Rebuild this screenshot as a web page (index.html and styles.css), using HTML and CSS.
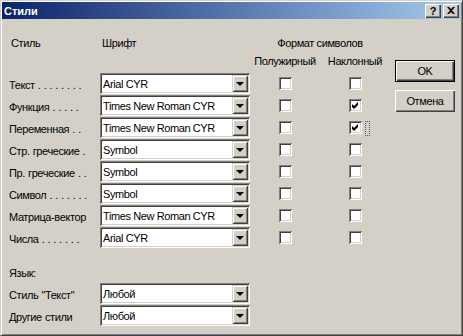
FILE: index.html
```
<!DOCTYPE html>
<html lang="ru">
<head>
  <meta charset="UTF-8">
  <title>Стили</title>
  <link rel="stylesheet" href="styles.css">
</head>
<body>
  <div class="window">
    <div class="titlebar">
      <span class="title">Стили</span>
      <div class="caption-buttons">
        <span class="cap-btn help">?</span>
        <span class="cap-btn close">
          <svg width="8" height="7" viewBox="0 0 8 7"><path d="M0 0h2l2 2 2-2h2L5 3.5 8 7H6L4 5 2 7H0l3-3.5z" fill="#000"/></svg>
        </span>
      </div>
    </div>
    <div class="client">
      <div class="styles">
        <div class="row head">
          <span class="hdr">Стиль</span>
          <span class="hdr">Шрифт</span>
          <span class="hdr fmt">Формат символов</span>
        </div>
        <div class="row sub">
          <span></span><span></span>
          <span class="sub-hdr">Полужирный</span>
          <span class="sub-hdr">Наклонный</span>
        </div>

        <div class="rows">
          <div class="row item">
            <span class="label">Текст . . . . . . . .</span>
            <div class="combo"><span class="value">Arial CYR</span><span class="drop"><i></i></span></div>
            <span class="cell"><span class="check"></span></span>
            <span class="cell"><span class="check"></span></span>
          </div>
          <div class="row item">
            <span class="label">Функция . . . . .</span>
            <div class="combo"><span class="value">Times New Roman CYR</span><span class="drop"><i></i></span></div>
            <span class="cell"><span class="check"></span></span>
            <span class="cell"><span class="check on"><svg width="7" height="7" viewBox="0 0 7 7"><path d="M0 2l2 2 4-4v3L2 7 0 5z" fill="#000"/></svg></span></span>
          </div>
          <div class="row item">
            <span class="label">Переменная . .</span>
            <div class="combo"><span class="value">Times New Roman CYR</span><span class="drop"><i></i></span></div>
            <span class="cell"><span class="check"></span></span>
            <span class="cell"><span class="check on"><svg width="7" height="7" viewBox="0 0 7 7"><path d="M0 2l2 2 4-4v3L2 7 0 5z" fill="#000"/></svg><span class="focus"></span></span></span>
          </div>
          <div class="row item">
            <span class="label">Стр. греческие .</span>
            <div class="combo"><span class="value">Symbol</span><span class="drop"><i></i></span></div>
            <span class="cell"><span class="check"></span></span>
            <span class="cell"><span class="check"></span></span>
          </div>
          <div class="row item">
            <span class="label">Пр. греческие . .</span>
            <div class="combo"><span class="value">Symbol</span><span class="drop"><i></i></span></div>
            <span class="cell"><span class="check"></span></span>
            <span class="cell"><span class="check"></span></span>
          </div>
          <div class="row item">
            <span class="label">Символ . . . . . . .</span>
            <div class="combo"><span class="value">Symbol</span><span class="drop"><i></i></span></div>
            <span class="cell"><span class="check"></span></span>
            <span class="cell"><span class="check"></span></span>
          </div>
          <div class="row item">
            <span class="label">Матрица-вектор</span>
            <div class="combo"><span class="value">Times New Roman CYR</span><span class="drop"><i></i></span></div>
            <span class="cell"><span class="check"></span></span>
            <span class="cell"><span class="check"></span></span>
          </div>
          <div class="row item">
            <span class="label">Числа . . . . . . .</span>
            <div class="combo"><span class="value">Arial CYR</span><span class="drop"><i></i></span></div>
            <span class="cell"><span class="check"></span></span>
            <span class="cell"><span class="check"></span></span>
          </div>
        </div>

        <div class="lang-title">Язык:</div>
        <div class="rows">
          <div class="row item">
            <span class="label">Стиль "Текст"</span>
            <div class="combo"><span class="value">Любой</span><span class="drop"><i></i></span></div>
          </div>
          <div class="row item">
            <span class="label">Другие стили</span>
            <div class="combo"><span class="value">Любой</span><span class="drop"><i></i></span></div>
          </div>
        </div>
      </div>

      <div class="side">
        <span class="btn default">OK</span>
        <span class="btn">Отмена</span>
      </div>
    </div>
  </div>
</body>
</html>
```
FILE: styles.css
```
html,
body {
  margin: 0;
  background-color: #d4d0c8;
  font-family: "Liberation Sans", Arial, sans-serif;
  font-size: 11px;
  letter-spacing: -0.4px;
  color: #000;
}
.window {
  width: 463px;
  height: 336px;
  box-sizing: border-box;
  background: #d4d0c8;
  border: 1px solid;
  border-color: #d4d0c8 #404040 #404040 #d4d0c8;
  box-shadow: inset 1px 1px #fff, inset -1px -1px #808080;
  padding: 1px;
}
.titlebar {
  height: 17px;
  display: flex;
  align-items: center;
  justify-content: space-between;
  padding: 0 2px 0 2px;
  background: linear-gradient(to right, #0a246a, #a6caf0);
}
.title {
  color: #fff;
  font-weight: bold;
  font-size: 11px;
  letter-spacing: 0;
}
.caption-buttons {
  display: flex;
  gap: 2px;
}
.cap-btn {
  width: 16px;
  height: 14px;
  box-sizing: border-box;
  display: flex;
  align-items: center;
  justify-content: center;
  background: #d4d0c8;
  box-shadow: inset 1px 1px #fff, inset -1px -1px #404040, inset -2px -2px #808080;
  font-weight: bold;
  font-size: 11px;
  line-height: 14px;
}
.client {
  display: flex;
  padding: 17px 0 0 7px;
}
.styles {
  width: 381px;
}
.row {
  display: grid;
  grid-template-columns: 91px 150px 70px 70px;
  align-items: center;
}
.head {
  height: 14px;
}
.hdr {
  padding-left: 2px;
}
.hdr.fmt {
  grid-column: 3 / span 2;
  text-align: center;
  padding-left: 0;
}
.sub {
  height: 14px;
  margin-top: 4px;
  margin-bottom: 5px;
}
.sub-hdr {
  text-align: center;
}
.item {
  height: 21px;
  margin-bottom: 1px;
}
.label {
  white-space: nowrap;
  padding-top: 2px;
  word-spacing: 0.5px;
}
.combo {
  height: 21px;
  box-sizing: border-box;
  display: flex;
  padding: 2px;
  background: #fff;
  box-shadow: inset 1px 1px #808080, inset -1px -1px #fff, inset 2px 2px #404040, inset -2px -2px #d4d0c8;
}
.combo .value {
  flex: 1;
  padding-left: 1px;
  line-height: 18px;
  white-space: nowrap;
}
.drop {
  width: 16px;
  height: 17px;
  box-sizing: border-box;
  display: flex;
  align-items: center;
  justify-content: center;
  background: #d4d0c8;
  box-shadow: inset 1px 1px #d4d0c8, inset -1px -1px #404040, inset 2px 2px #fff, inset -2px -2px #808080;
}
.drop i {
  width: 0;
  height: 0;
  border-left: 4px solid transparent;
  border-right: 4px solid transparent;
  border-top: 4px solid #000;
  margin-top: 1px;
}
.cell {
  display: flex;
  justify-content: center;
}
.check {
  position: relative;
  width: 13px;
  height: 13px;
  box-sizing: border-box;
  display: flex;
  align-items: center;
  justify-content: center;
  background: #fff;
  box-shadow: inset 1px 1px #808080, inset -1px -1px #fff, inset 2px 2px #404040, inset -2px -2px #d4d0c8;
}
.focus {
  position: absolute;
  left: 16px;
  top: 0;
  width: 5px;
  height: 15px;
  box-sizing: border-box;
  border: 1px dotted #555;
}
.lang-title {
  height: 14px;
  line-height: 14px;
  margin-top: 18px;
  margin-bottom: 3px;
}
.side {
  display: flex;
  flex-direction: column;
  gap: 8px;
  margin-top: 24px;
  margin-left: 5px;
}
.btn {
  width: 60px;
  height: 22px;
  box-sizing: border-box;
  display: flex;
  align-items: center;
  justify-content: center;
  background: #d4d0c8;
  box-shadow: inset 1px 1px #fff, inset -1px -1px #404040, inset -2px -2px #808080;
}
.btn.default {
  border: 1px solid #000;
}
```
